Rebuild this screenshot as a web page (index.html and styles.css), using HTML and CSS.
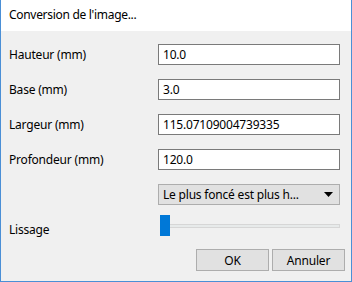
FILE: index.html
```html
<!DOCTYPE html>
<html lang="fr">
<head>
    <meta charset="UTF-8">
    <title>Conversion de l'image...</title>
    <link rel="stylesheet" href="styles.css">
</head>
<body>
    <div class="window">
        <div class="titlebar">Conversion de l'image...</div>
        <div class="content">
            <div class="form">
                <label>Hauteur (mm)</label>
                <input type="text" value="10.0">
                <label>Base (mm)</label>
                <input type="text" value="3.0">
                <label>Largeur (mm)</label>
                <input type="text" value="115.07109004739335">
                <label>Profondeur (mm)</label>
                <input type="text" value="120.0">
                <span></span>
                <div class="combo">
                    <span>Le plus foncé est plus h...</span>
                    <svg width="9" height="5" viewBox="0 0 9 5"><path d="M0 0H9L4.5 5Z" fill="#000"/></svg>
                </div>
                <label>Lissage</label>
                <div class="slider">
                    <div class="groove"></div>
                    <div class="handle"></div>
                </div>
            </div>
            <div class="buttons">
                <button>OK</button>
                <button>Annuler</button>
            </div>
        </div>
    </div>
</body>
</html>
```

FILE: styles.css
```css
*{
    box-sizing: border-box;
    margin: 0;
    padding: 0;
}

html{
    font-family: "Segoe UI", "Noto Sans", sans-serif;
    font-size: 12px;
    letter-spacing: -0.2px;
    color: #000;
}

body{
    width: 352px;
    height: 282px;
    overflow: hidden;
}

.window{
    width: 352px;
    height: 282px;
    display: flex;
    flex-direction: column;
    border: solid #4a8fd6 1px;
    border-top: none;
    background-color: #f0f0f0;
}

.titlebar{
    height: 31px;
    background-color: white;
    padding-left: 8px;
    line-height: 29px;
    letter-spacing: -0.3px;
}

.content{
    display: flex;
    flex-direction: column;
    padding: 13px 8px 0 8px;
}

.form{
    display: grid;
    grid-template-columns: 149px 182px;
    grid-auto-rows: 21px;
    row-gap: 14px;
    align-items: center;
}

label{
    line-height: 21px;
}

input{
    height: 21px;
    width: 182px;
    border: solid #7a7a7a 1px;
    background-color: white;
    font: inherit;
    letter-spacing: -0.2px;
    padding-left: 4px;
    outline: none;
}

.combo{
    height: 21px;
    display: flex;
    align-items: center;
    justify-content: space-between;
    padding: 0 6px 0 4px;
    background-color: #e1e1e1;
    border: solid #adadad 1px;
}

.slider{
    position: relative;
    height: 21px;
    margin-top: -8px;
}

.groove{
    position: absolute;
    left: 2px;
    right: 0;
    top: 9px;
    height: 4px;
    background-color: #e7eaea;
    border: solid #d6d6d6 1px;
}

.handle{
    position: absolute;
    left: 2px;
    top: 0;
    width: 10px;
    height: 21px;
    background-color: #0078d7;
}

.buttons{
    display: flex;
    justify-content: flex-end;
    gap: 3px;
    margin-top: 9px;
    margin-right: -2px;
}

button{
    width: 73px;
    height: 22px;
    font: inherit;
    letter-spacing: -0.2px;
    background-color: #e1e1e1;
    border: solid #adadad 1px;
}
```
